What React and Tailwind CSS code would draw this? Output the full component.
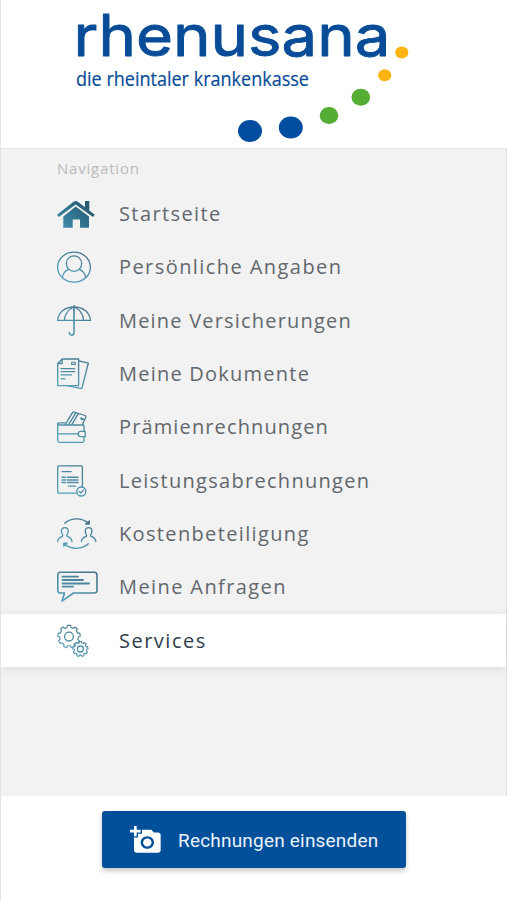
import { MdAddAPhoto } from "react-icons/md";

/* =====================
   ICONS
===================== */
const Icon = ({ children }) => (
  <svg
    viewBox="0 0 44 40"
    className="h-10 w-11 shrink-0"
    fill="none"
    stroke="url(#teal)"
    strokeWidth="1.3"
    strokeLinecap="round"
    strokeLinejoin="round"
  >
    {children}
  </svg>
);

const HomeIcon = () => (
  <Icon>
    <path d="M6.3 22.5 18.7 12.6 32 22.5V33.7H23V25.5H15.7V33.7H6.3Z" fill="url(#tealDark)" stroke="none" />
    <path d="M28 7H32.3V16.5L37.8 20.8 35.9 23.1 18.7 10.4 1.8 23.1 0 20.8 16.9 7.6Q18.7 6.3 20.5 7.6L28 13.2Z" fill="url(#tealDark)" stroke="none" />
  </Icon>
);

const PersonIcon = () => (
  <Icon>
    <ellipse cx="17" cy="20.2" rx="16.4" ry="15" />
    <ellipse cx="17" cy="16.6" rx="7.7" ry="7.8" />
    <path d="M5.3 30.5C6 26 8.5 23.6 11.8 22.4M22.2 22.4C25.5 23.6 28 26 28.7 30.5" />
  </Icon>
);

const UmbrellaIcon = () => (
  <Icon>
    <path d="M.6 19.4C1.5 11 8 6 17 6S32.5 11 33.6 19.4Z" />
    <path d="M7.3 19.4C8 13 11.5 8.2 17 6C22.5 8.2 26 13 26.7 19.4" />
    <path d="M17 4.8V31.2C17 35 12.3 35 12.3 31.6" strokeWidth="1.6" />
  </Icon>
);

const DocumentsIcon = () => (
  <Icon>
    <path d="M5.2 5H21.6V31.6H.7V9.5ZM5.2 5V9.5H.7" />
    <path d="M21.8 6.9 31.3 9.1 24.8 34.6 11 31.9" />
    <path d="M4 14.7H17.8M4 17.7H17.8M4 20.9H14.5M4 24.8H8" />
    <path d="M14.7 8.3H18.3V10.5H14.7Z" strokeWidth="1.1" />
  </Icon>
);

const WalletIcon = () => (
  <Icon>
    <path d="M27 24.3V19Q27 18 26 18H2Q.7 18 .7 16.5V33.5Q.7 35.3 2.5 35.3H25.3Q27 35.3 27 33.6V29.7" />
    <path d="M.7 16.7Q1 15.8 2.2 15.8H8M.7 26.8H21" />
    <path d="M28.2 24.4H23.8Q21.2 24.4 21.2 27T23.8 29.6H28.2Z" />
    <path d="M8 17.8 15.5 5.6Q16 4.7 17 5L28 8.5Q29.2 9 28.8 10.2L25.3 17.8M11.5 17.8 18.8 5.8M14.7 17.8 21.3 6.7" />
    <path d="M24.3 11.5 25.8 12.2" strokeWidth="2.2" />
  </Icon>
);

const ReportIcon = () => (
  <Icon>
    <path d="M19.5 32.1H2Q.7 32.1 .7 30.7V6.3Q.7 4.9 2 4.9H24Q25.4 4.9 25.4 6.3V25.5" />
    <path d="M5 10.6H14.2M11.5 25.2H18.5" />
    <path d="M5 16.2H8.3M10.3 16.2H21M5 18.9H8.3M10.3 18.9H21M5 21.6H8.3M10.3 21.6H21" strokeWidth="1.5" />
    <circle cx="24.3" cy="30.5" r="4.5" />
    <path d="M22.2 30.5 23.8 32 26.6 28.9" />
  </Icon>
);

const SharingIcon = () => (
  <Icon>
    <path d="M.6 27.5C.6 24.5 2.5 23.5 5.2 22.4C6.2 21.8 5.8 20.8 5.2 19.8C3.6 16.8 4.4 13.7 7.8 13.7S12 16.8 10.4 19.8C9.8 20.8 9.4 21.8 10.4 22.4C13.1 23.5 15 24.5 15 27.5" />
    <path d="M24.4 27.5C24.4 24.5 26.3 23.5 29 22.4C30 21.8 29.6 20.8 29 19.8C27.4 16.8 28.2 13.7 31.6 13.7S35.8 16.8 34.2 19.8C33.6 20.8 33.2 21.8 34.2 22.4C36.9 23.5 38.8 24.5 38.8 27.5" />
    <path d="M7.8 9.2C14 3.3 25 3.3 31.5 9.2M31.3 29.8C25 35.7 14 35.8 7.5 30" />
    <path d="M32.3 6.9V10H28.7ZM6.8 32V29.2H10Z" fill="url(#tealDark)" />
  </Icon>
);

const MessageIcon = () => (
  <Icon>
    <path d="M3.3 5.2H37.3Q40 5.2 40 8V23.2Q40 26 37.3 26H16.5L5 34.2 7.5 26H3.3Q.8 26 .8 23.2V8Q.8 5.2 3.3 5.2Z" strokeWidth="1.6" />
    <path d="M5.5 9.7H21M5.5 13H26M5.5 16.5H32M5.5 19.7H16" strokeWidth="1.8" />
  </Icon>
);

// closed outline of a cog wheel, four points per tooth
const gearPath = (cx, cy, outer, inner, teeth) => {
  const step = (Math.PI * 2) / teeth;
  const points = [];
  for (let i = 0; i < teeth; i++) {
    [[-0.3, inner], [-0.2, outer], [0.2, outer], [0.3, inner]].forEach(([offset, r]) => {
      const a = (i + offset) * step - Math.PI / 2;
      points.push(`${(cx + r * Math.cos(a)).toFixed(2)} ${(cy + r * Math.sin(a)).toFixed(2)}`);
    });
  }
  return `M${points.join("L")}Z`;
};

const GearsIcon = () => (
  <Icon>
    <path d={gearPath(12, 15.6, 11.3, 9.3, 9)} strokeWidth="1.1" />
    <circle cx="12" cy="15.6" r="4.4" />
    <path d={gearPath(23.4, 28, 7.6, 6.2, 9)} strokeWidth="1.1" className="fill-white" />
    <circle cx="23.4" cy="28" r="3" />
  </Icon>
);

/* =====================
   LOGO
===================== */
const Logo = () => (
  <svg viewBox="0 0 507 148" className="block h-[148px] w-full" role="img" aria-label="rhenusana">
    <g fill="#084c98" stroke="#084c98" strokeLinejoin="round">
      <text
        x="73.5"
        y="56.3"
        fontSize="57.5"
        textLength="317"
        lengthAdjust="spacingAndGlyphs"
        strokeWidth="0.9"
        className="font-['Inter',sans-serif]"
      >
        rhenusana
      </text>
      <text
        x="76"
        y="86"
        fontSize="20"
        textLength="233"
        lengthAdjust="spacingAndGlyphs"
        strokeWidth="0.2"
        className="font-['Open_Sans',sans-serif]"
      >
        die rheintaler krankenkasse
      </text>
    </g>
    <ellipse cx="401.8" cy="52.5" rx="6.6" ry="6" fill="#fbb40f" />
    <ellipse cx="384.7" cy="75.3" rx="6.6" ry="6" fill="#fbb40f" />
    <ellipse cx="360.8" cy="97.3" rx="9.3" ry="8.5" fill="#55ad35" />
    <ellipse cx="329" cy="115.6" rx="9.3" ry="8.5" fill="#55ad35" />
    <ellipse cx="290.8" cy="127.5" rx="12" ry="11" fill="#034da0" />
    <ellipse cx="250" cy="131" rx="12" ry="11" fill="#034da0" />
  </svg>
);

/* =====================
   NAVIGATION
===================== */
const items = [
  { label: "Startseite", icon: HomeIcon, tracking: "tracking-[1.4px]" },
  { label: "Persönliche Angaben", icon: PersonIcon, tracking: "tracking-[1.43px]" },
  { label: "Meine Versicherungen", icon: UmbrellaIcon, tracking: "tracking-[1.2px]" },
  { label: "Meine Dokumente", icon: DocumentsIcon, tracking: "tracking-[1.23px]" },
  { label: "Prämienrechnungen", icon: WalletIcon, tracking: "tracking-[1.13px]" },
  { label: "Leistungsabrechnungen", icon: ReportIcon, tracking: "tracking-[1.3px]" },
  { label: "Kostenbeteiligung", icon: SharingIcon, tracking: "tracking-[1.35px]" },
  { label: "Meine Anfragen", icon: MessageIcon, tracking: "tracking-[1.4px]" },
  { label: "Services", icon: GearsIcon, tracking: "tracking-[1.5px]", active: true },
];

const NavItem = ({ label, icon: ItemIcon, tracking, active }) => (
  <li
    className={`flex h-[53.3px] items-center gap-[18px] pl-14 ${
      active ? "bg-white text-[#2f3e4c] shadow-[0_2px_10px_rgba(0,0,0,0.09)]" : "text-[#62686d]"
    }`}
  >
    <ItemIcon />
    <span className={`text-xl whitespace-nowrap ${tracking}`}>{label}</span>
  </li>
);

/* =====================
   PAGE
===================== */
const App = () => (
  <div className="flex h-[900px] w-full flex-col overflow-hidden border-l border-[#e3e3e3] bg-white font-['Open_Sans',sans-serif]">
    <svg className="absolute size-0" aria-hidden="true">
      <defs>
        <linearGradient id="teal" gradientUnits="userSpaceOnUse" x1="30" y1="4" x2="10" y2="36">
          <stop offset="0" stopColor="#467488" />
          <stop offset="1" stopColor="#55a0bc" />
        </linearGradient>
        <linearGradient id="tealDark" gradientUnits="userSpaceOnUse" x1="34" y1="6" x2="8" y2="34">
          <stop offset="0" stopColor="#235065" />
          <stop offset="1" stopColor="#3d8bab" />
        </linearGradient>
      </defs>
    </svg>

    <header className="-ml-px h-[148px] shrink-0">
      <Logo />
    </header>

    <nav className="h-[648px] shrink-0 border-t border-r border-t-[#e2e2e2] border-r-[#dfe1e5] bg-[#f2f2f2]">
      <h2 className="flex h-[38.5px] items-center pl-14 text-[15px] tracking-[0.8px] text-[#b9bbbd]">Navigation</h2>
      <ul>
        {items.map((item) => (
          <NavItem key={item.label} {...item} />
        ))}
      </ul>
    </nav>

    <footer className="flex justify-center pt-[15px]">
      <button className="flex h-[57px] w-[304px] items-center gap-4 rounded-[3px] bg-[#024f9a] pl-7 font-['Roboto',sans-serif] text-[19px] tracking-[0.2px] text-[#e9f3fb] shadow-[0_3px_5px_rgba(0,0,0,0.22)]">
        <MdAddAPhoto className="size-8 shrink-0 scale-y-95 text-white" />
        <span className="pt-[3px] whitespace-nowrap">Rechnungen einsenden</span>
      </button>
    </footer>
  </div>
);

export default App;
